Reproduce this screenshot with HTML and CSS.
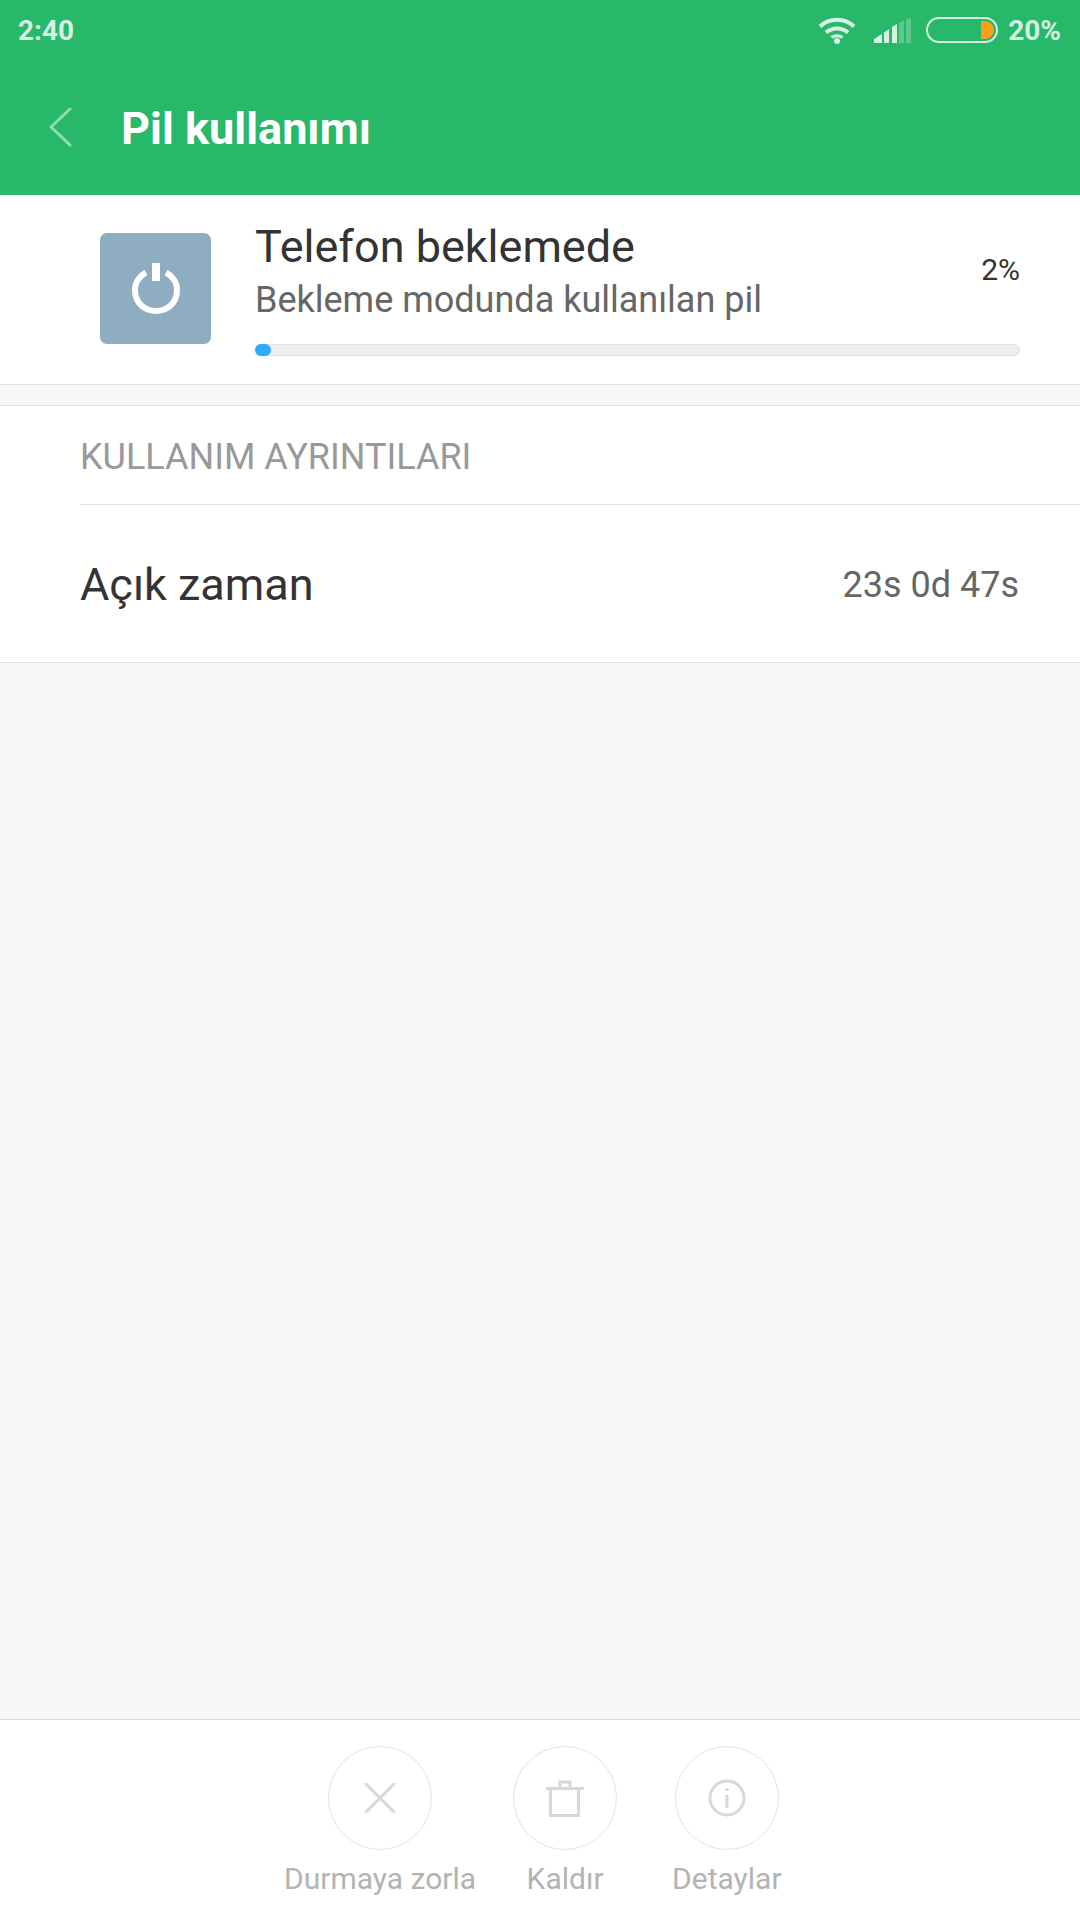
FILE: index.html
```html
<!DOCTYPE html>
<html lang="tr">
<head>
  <meta charset="UTF-8">
  <title>Pil kullanımı</title>
  <link rel="stylesheet" href="styles.css">
</head>
<body>

<div class="top">
  <div class="status">
    <span class="time">2:40</span>
    <div class="status-right">
      <svg class="wifi" width="38" height="27" viewBox="0 0 38 27" fill="none" stroke="#d5f1e2" stroke-width="4">
        <path d="M2 9.500C11.500 0.500 26.500 0.500 36 9.500"/>
        <path d="M8 15.500C14 10 24 10 30 15.500"/>
        <path d="M13.500 20.500C16.500 18 21.500 18 24.500 20.500" stroke-width="3"/>
        <circle cx="19" cy="24" r="3" fill="#d5f1e2" stroke="none"/>
      </svg>
      <svg class="signal" width="37" height="25" viewBox="0 0 37 25" fill="#d5f1e2">
        <path d="M0 25V21L8 16V25Z"/>
        <path d="M10 25V14.500L15 11V25Z"/>
        <path d="M18 25V9L23 6V25Z"/>
        <path d="M25 25V5L30 2.500V25Z" opacity=".3"/>
        <path d="M32 25V1.500L37 0V25Z" opacity=".3"/>
      </svg>
      <div class="battery"><div class="battery-level"></div></div>
      <span class="percent">20%</span>
    </div>
  </div>
  <div class="titlebar">
    <svg class="back" width="24" height="40" viewBox="0 0 24 40" fill="none" stroke="#93dbb4" stroke-width="3" stroke-linecap="round" stroke-linejoin="round">
      <path d="M21 2L2 20L21 38"/>
    </svg>
    <h1>Pil kullanımı</h1>
  </div>
</div>

<div class="app-row">
  <div class="app-icon">
    <svg width="48" height="51" viewBox="0 0 48 51" fill="none" stroke="#fff" stroke-width="6">
      <path d="M14 9.500C7.500 13 3 19.500 3 27C3 39.500 12 48 24 48C36 48 45 39.500 45 27C45 19.500 40.500 13 34 9.500"/>
      <path d="M24 0V18" stroke-width="8"/>
    </svg>
  </div>
  <div class="app-info">
    <div class="app-head">
      <div>
        <div class="app-name">Telefon beklemede</div>
        <div class="app-desc">Bekleme modunda kullanılan pil</div>
      </div>
      <span class="app-pct">2%</span>
    </div>
    <div class="bar"><div class="bar-fill" style="width: 2%"></div></div>
  </div>
</div>

<div class="details">
  <div class="section-title">KULLANIM AYRINTILARI</div>
  <div class="detail-row">
    <span class="detail-name">Açık zaman</span>
    <span class="detail-value">23s 0d 47s</span>
  </div>
</div>

<div class="spacer"></div>

<div class="actions">
  <div class="action">
    <div class="circle">
      <svg width="32" height="32" viewBox="0 0 32 32" fill="none" stroke="#d8d8d8" stroke-width="3" stroke-linecap="round">
        <path d="M2 2L30 30M30 2L2 30"/>
      </svg>
    </div>
    <span>Durmaya zorla</span>
  </div>
  <div class="action">
    <div class="circle">
      <svg width="40" height="37" viewBox="0 0 40 37" fill="none" stroke="#d8d8d8" stroke-width="3">
        <path d="M1 8.500H39"/>
        <path d="M5.500 8.500V35.500H33.500V8.500"/>
        <path d="M15 8V2H25V8"/>
      </svg>
    </div>
    <span>Kaldır</span>
  </div>
  <div class="action action-last">
    <div class="circle">
      <svg width="38" height="38" viewBox="0 0 38 38" fill="none" stroke="#d8d8d8" stroke-width="3">
        <circle cx="19" cy="19" r="17"/>
        <path d="M19 16V29"/>
        <circle cx="19" cy="10.500" r="1.800" fill="#d8d8d8" stroke="none"/>
      </svg>
    </div>
    <span>Detaylar</span>
  </div>
</div>

</body>
</html>
```

FILE: styles.css
```css
html, body {
  height: 100%;
}
body {
  margin: 0;
  display: flex;
  flex-direction: column;
  font-family: Roboto, sans-serif;
  background-color: #f7f7f7;
  color: #333;
}

.top {
  height: 195px;
  background-color: #28b86a;
}
.status {
  height: 60px;
  display: flex;
  justify-content: space-between;
  align-items: center;
  padding: 0 19px 0 18px;
  color: #d5f1e2;
  font-size: 28px;
  font-weight: 700;
}
.status-right {
  display: flex;
  align-items: center;
}
.wifi {
  margin-right: 18px;
}
.signal {
  margin-right: 15px;
}
.battery {
  width: 72px;
  height: 26px;
  box-sizing: border-box;
  border: 2px solid #d5f1e2;
  border-radius: 13px;
  margin-right: 10px;
  display: flex;
  justify-content: flex-end;
  align-items: center;
  padding-right: 2px;
}
.battery-level {
  width: 13px;
  height: 18px;
  background-color: #ff9c1a;
  border-radius: 0 9px 9px 0;
}
.titlebar {
  height: 135px;
  display: flex;
  align-items: center;
  padding: 0 0 2px 49px;
  box-sizing: border-box;
}
.titlebar h1 {
  margin: 4px 0 0 48px;
  font-size: 45px;
  font-weight: 700;
  color: #fff;
}

.app-row {
  height: 190px;
  box-sizing: border-box;
  background-color: #fff;
  border-bottom: 1px solid #e3e3e3;
  display: flex;
  padding: 38px 60px 0 100px;
}
.app-icon {
  width: 111px;
  height: 111px;
  background-color: #8fadc0;
  border-radius: 7px;
  display: flex;
  align-items: center;
  justify-content: center;
  margin-right: 44px;
  flex-shrink: 0;
}
.app-info {
  flex: 1;
}
.app-head {
  display: flex;
  justify-content: space-between;
  align-items: flex-start;
  margin-top: -13px;
}
.app-name {
  font-size: 45px;
  line-height: 54px;
}
.app-desc {
  font-size: 36px;
  line-height: 52px;
  color: #666;
}
.app-pct {
  font-size: 30px;
  margin-top: 32px;
}
.bar {
  height: 12px;
  margin-top: 18px;
  box-sizing: border-box;
  background-color: #efefef;
  border: 1px solid #e0e0e0;
  border-radius: 6px;
}
.bar-fill {
  height: 12px;
  margin: -1px 0 0 -1px;
  min-width: 16px;
  background-color: #2eaafa;
  border-radius: 6px;
}

.details {
  margin-top: 20px;
  height: 258px;
  box-sizing: border-box;
  background-color: #fff;
  border-top: 1px solid #e3e3e3;
  border-bottom: 1px solid #e3e3e3;
  padding-left: 80px;
}
.section-title {
  height: 99px;
  box-sizing: border-box;
  border-bottom: 1px solid #e0e0e0;
  padding-top: 3px;
  font-size: 36px;
  line-height: 96px;
  color: #999;
}
.detail-row {
  height: 157px;
  box-sizing: border-box;
  display: flex;
  justify-content: space-between;
  align-items: center;
  padding: 2px 61px 0 0;
}
.detail-name {
  font-size: 45px;
}
.detail-value {
  font-size: 36px;
  color: #666;
}

.spacer {
  flex: 1;
}

.actions {
  height: 201px;
  box-sizing: border-box;
  background-color: #fff;
  border-top: 1px solid #dcdcdc;
  display: flex;
  gap: 37px;
  padding: 26px 0 0 284px;
}
.action {
  display: flex;
  flex-direction: column;
  align-items: center;
  font-size: 30px;
  color: #b3b3b3;
}
.action-last {
  margin-left: 18px;
}
.circle {
  width: 104px;
  height: 104px;
  box-sizing: border-box;
  border: 1px solid #e3e3e3;
  border-radius: 50%;
  display: flex;
  align-items: center;
  justify-content: center;
  margin-bottom: 11px;
}
```
